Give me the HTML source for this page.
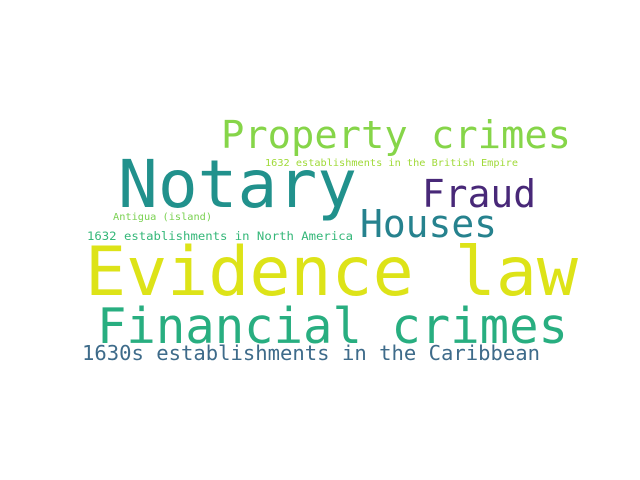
<!DOCTYPE html>
<html><head><meta charset="utf-8"><style>
html,body{margin:0;padding:0;background:#fff;width:640px;height:480px;overflow:hidden}
svg text{font-family:"DejaVu Sans Mono","Liberation Mono",monospace}
</style></head><body>
<svg width="640" height="480" xmlns="http://www.w3.org/2000/svg">
<rect width="640" height="480" fill="#fff"/>
<text x="221" y="148" font-size="38" fill="#86d549" textLength="350" lengthAdjust="spacingAndGlyphs">Property crimes</text>
<text x="265" y="166" font-size="10" fill="#a0da39" textLength="253" lengthAdjust="spacingAndGlyphs">1632 establishments in the British Empire</text>
<text x="118" y="207" font-size="66" fill="#21918c" textLength="239" lengthAdjust="spacingAndGlyphs">Notary</text>
<text x="422" y="207" font-size="38" fill="#482878" textLength="114" lengthAdjust="spacingAndGlyphs">Fraud</text>
<text x="113" y="220" font-size="10" fill="#7ad151" textLength="99" lengthAdjust="spacingAndGlyphs">Antigua (island)</text>
<text x="360" y="237" font-size="38" fill="#26828e" textLength="137" lengthAdjust="spacingAndGlyphs">Houses</text>
<text x="87" y="240" font-size="11.3" fill="#35b779" textLength="266" lengthAdjust="spacingAndGlyphs">1632 establishments in North America</text>
<text x="85" y="295" font-size="68" fill="#dde318" textLength="493" lengthAdjust="spacingAndGlyphs">Evidence law</text>
<text x="97" y="343" font-size="49" fill="#28ae80" textLength="471" lengthAdjust="spacingAndGlyphs">Financial crimes</text>
<text x="82" y="360" font-size="20" fill="#3e6b8a" textLength="458" lengthAdjust="spacingAndGlyphs">1630s establishments in the Caribbean</text>
</svg>
</body></html>
